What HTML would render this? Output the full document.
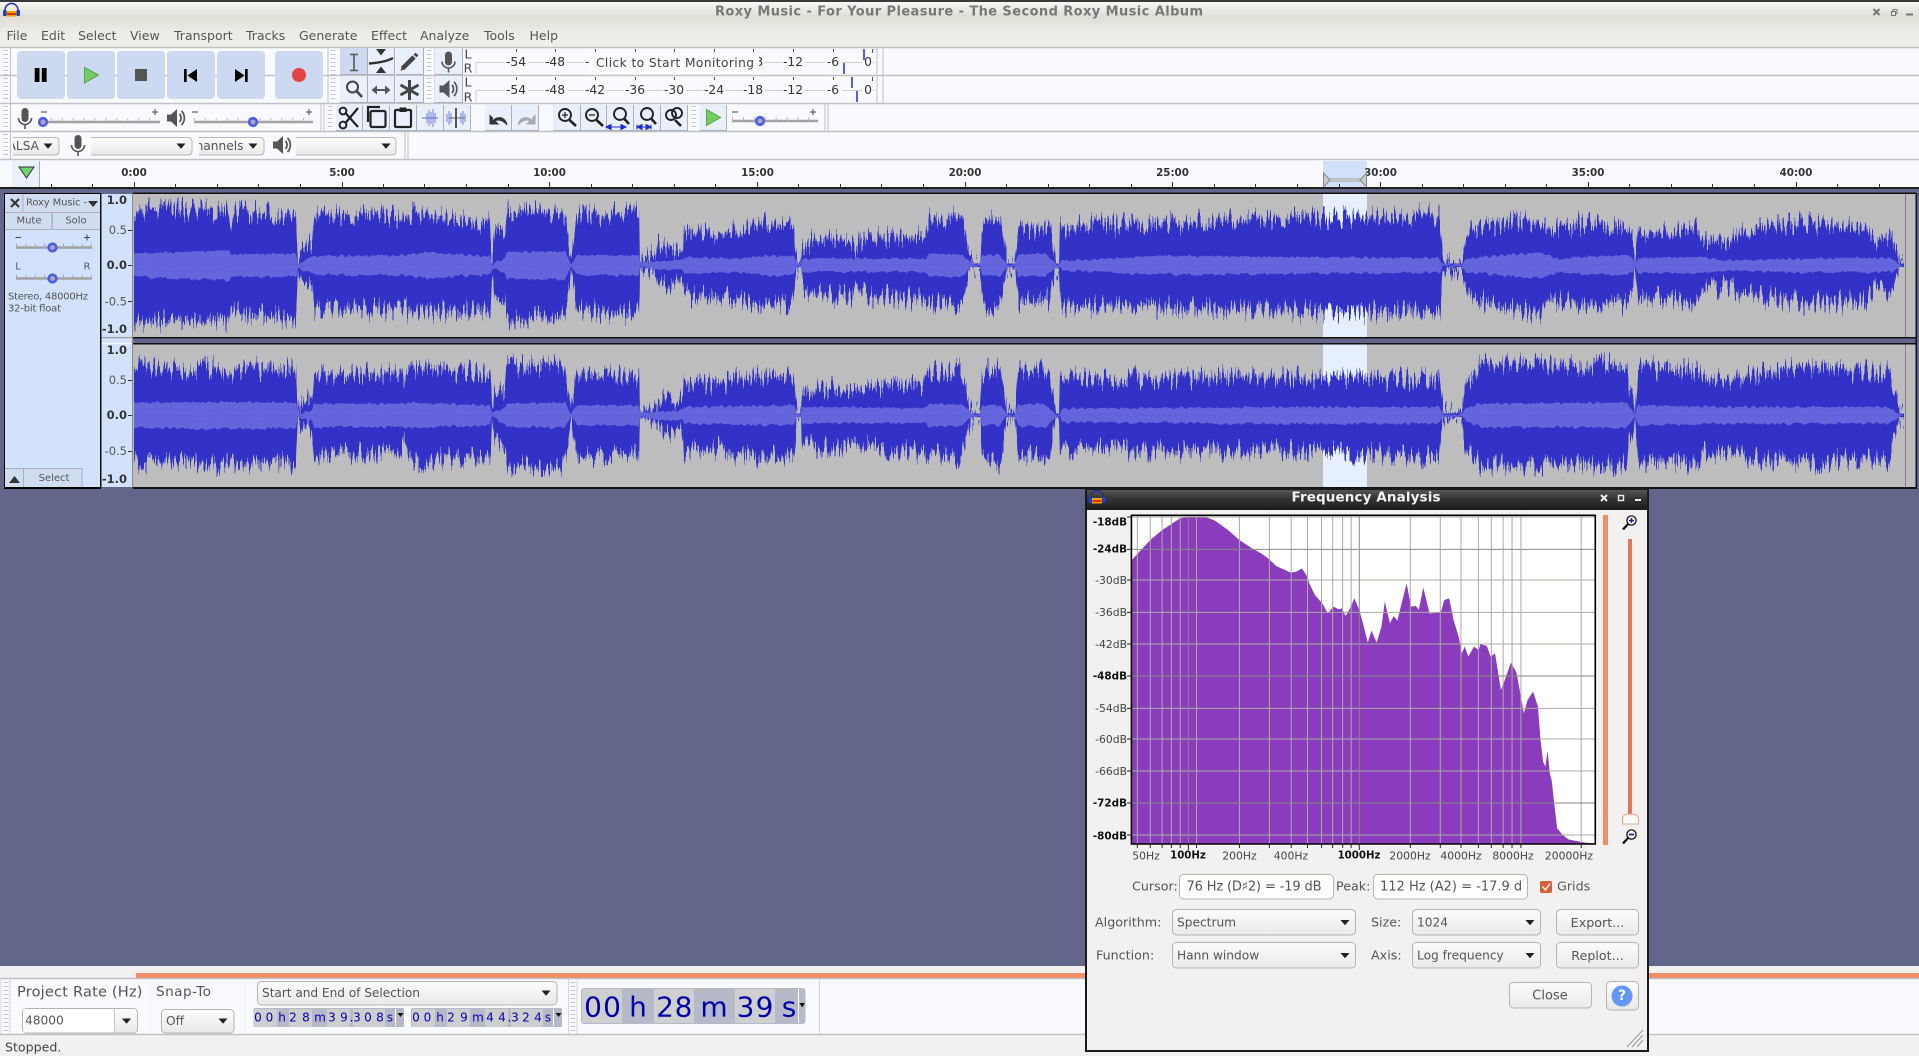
<!DOCTYPE html>
<html lang="en"><head><meta charset="utf-8"><title>Roxy Music - For Your Pleasure - The Second Roxy Music Album</title>
<style>
html,body{margin:0;padding:0;background:#62668a;overflow:hidden}
svg{display:block}
text{font-family:"DejaVu Sans",sans-serif;dominant-baseline:central;fill:#555;font-size:12.5px}
.c{text-anchor:middle}.e{text-anchor:end}
.rul{font-size:10.3px;font-weight:bold;fill:#333;text-anchor:middle}
.mt{font-size:12.3px;fill:#333;text-anchor:middle}
.pn{font-size:10px;fill:#555}
.vb{font-size:11.5px;font-weight:bold;fill:#333;text-anchor:end}
.vn{font-size:11.5px;fill:#555;text-anchor:end}
.db{font-size:10.4px;font-weight:bold;fill:#111;text-anchor:end}
.dn{font-size:10.8px;fill:#444;text-anchor:end}
.hz{font-size:10.8px;fill:#444;text-anchor:middle}
.hb{font-size:10.2px;font-weight:bold;fill:#111;text-anchor:middle}
.dl{font-size:12.7px;fill:#555}
.cb{font-size:12.2px;fill:#555}
.st{font-size:12px;fill:#0000b0;text-anchor:middle}
.bt{font-size:28px;fill:#0000a8;text-anchor:middle}
.btn{fill:#e9f0fc;stroke:none}
.bev{fill:none;stroke:#aab0bc;stroke-width:1}
.g{stroke:#c8c8c8;stroke-width:5;stroke-dasharray:1 3;fill:none}
.s{stroke:#c2c2c4;stroke-width:1.5;fill:none}
.nss{vector-effect:non-scaling-stroke}
</style></head>
<body>
<svg xmlns="http://www.w3.org/2000/svg" width="1919" height="1056" viewBox="0 0 1919 1056">
<defs>
<linearGradient id="tb" x1="0" y1="0" x2="0" y2="1"><stop offset="0" stop-color="#fafaf7"/><stop offset=".35" stop-color="#dedfd6"/><stop offset=".75" stop-color="#efede8"/><stop offset="1" stop-color="#f0eeea"/></linearGradient>
<linearGradient id="cg" x1="0" y1="0" x2="0" y2="1"><stop offset="0" stop-color="#fcfcfc"/><stop offset="1" stop-color="#e9e9e7"/></linearGradient>
<linearGradient id="ft" x1="0" y1="0" x2="0" y2="1"><stop offset="0" stop-color="#555"/><stop offset=".45" stop-color="#333"/><stop offset="1" stop-color="#1c1c1c"/></linearGradient>
<filter id="sp" x="0" y="-10%" width="100%" height="120%" color-interpolation-filters="sRGB">
<feTurbulence type="fractalNoise" baseFrequency="0.55 0.012" numOctaves="2" seed="4"/>
<feColorMatrix values="1.8 0 0 0 -0.38  0 0 0 0 .5  0 0 0 0 .5  0 0 0 0 1"/>
<feDisplacementMap in="SourceGraphic" scale="26" xChannelSelector="G" yChannelSelector="R"/>
</filter>
<filter id="sr" x="0" y="-10%" width="100%" height="120%" color-interpolation-filters="sRGB">
<feTurbulence type="fractalNoise" baseFrequency="0.25 0.02" numOctaves="1" seed="9"/>
<feColorMatrix values="1.2 0 0 0 -0.1  0 0 0 0 .5  0 0 0 0 .5  0 0 0 0 1"/>
<feDisplacementMap in="SourceGraphic" scale="5" xChannelSelector="G" yChannelSelector="R"/>
</filter>
<clipPath id="w1"><rect x="134" y="194" width="1771" height="143"/></clipPath>
<clipPath id="w2"><rect x="134" y="344" width="1771" height="143"/></clipPath>
<clipPath id="alsa"><rect x="13" y="135" width="46" height="22"/></clipPath>
<clipPath id="chan"><rect x="199" y="135" width="65" height="22"/></clipPath>
<clipPath id="pk"><rect x="1374" y="875" width="148" height="24"/></clipPath>
<g id="mic"><rect x="-3.5" y="-10" width="7" height="14" rx="3.5" fill="#555"/><path d="M-6.5,0 a6.5,6.5 0 0 0 13,0 M0,6.5 V11" fill="none" stroke="#555" stroke-width="1.6"/></g>
<g id="spk"><path d="M-9,-3.5 H-5 L1,-9 V9 L-5,3.5 H-9Z" fill="#555"/><path d="M3.5,-4 a6,6 0 0 1 0,8 M5.5,-7 a10,10 0 0 1 0,14" fill="none" stroke="#555" stroke-width="1.7"/></g>
<g id="aud"><path d="M-6.5,2 V0 A6.5,6.5 0 0 1 6.5,0 V2" fill="none" stroke="#1c2f9e" stroke-width="1.5"/><rect x="-8.5" y="0" width="3.5" height="6" rx="1" fill="#1c3fc8"/><rect x="5" y="0" width="3.5" height="6" rx="1" fill="#1c3fc8"/><rect x="-5" y="1" width="10" height="5.5" fill="#f5a000"/><rect x="-4.5" y="3" width="9" height="2" fill="#e03010"/></g>
<g id="arr"><path d="M-4.5,-2.5 H4.5 L0,2.8Z" fill="#222"/></g>
<g id="thumb"><circle r="3.8" fill="#a8a8b8" stroke="#4c5ce8" stroke-width="2.6"/></g>
<polygon id="r1" points="134,0 134,-35 229,-45 231,-33 296,-35 298,-5 302,-12 314,-28 402,-30 430,-40 445,-35 490,-27 492,-5 505,-22 507,-40 565,-42 571,-3 577,-30 639,-30 640,-5 656,-12 683,-15 684,-25 738,-20 771,-30 794,-28 797,-4 801,-4 802,-20 926,-20 929,-35 962,-32 970,-10 975,-3 980,-3 982,-30 1000,-32 1007,-3 1015,-3 1018,-32 1045,-35 1056,-5 1060,-5 1062,-15 1100,-18 1150,-28 1200,-28 1280,-25 1439,-22 1443,-3 1462,-3 1466,-20 1509,-32 1541,-38 1560,-18 1574,-25 1627,-30 1633,-20 1635,-3 1638,-22 1700,-25 1725,-15 1800,-20 1868,-22 1892,-20 1900,-3 1904,0"/>
<polygon id="r2" points="134,0 134,-38 229,-40 296,-38 298,-5 312,-15 314,-35 402,-35 408,-38 490,-30 492,-5 505,-25 507,-35 565,-38 571,-3 577,-30 639,-30 640,-5 656,-12 683,-15 684,-25 794,-30 797,-4 801,-4 802,-25 926,-22 929,-35 962,-32 970,-10 975,-3 980,-3 982,-30 1000,-30 1007,-3 1015,-3 1018,-32 1045,-35 1056,-3 1060,-3 1062,-20 1280,-25 1439,-25 1443,-3 1462,-3 1466,-20 1480,-35 1627,-38 1635,-3 1638,-30 1725,-25 1800,-25 1888,-25 1900,-3 1904,0"/>
</defs>

<!-- base -->
<rect width="1919" height="1056" fill="#62668a"/>

<!-- title + menu -->
<rect x="0" y="0" width="1919" height="47" fill="url(#tb)"/>
<rect x="0" y="0" width="1919" height="2" fill="#3a3a3a"/>
<use href="#aud" x="11.5" y="10"/>
<text x="959" y="12" class="c" style="font-size:13px;font-weight:bold;fill:#777" textLength="488">Roxy Music - For Your Pleasure - The Second Roxy Music Album</text>
<path d="M1873.5,9 L1879.5,15 M1879.5,9 L1873.5,15" stroke="#777" stroke-width="2"/>
<path d="M1891.5,11.5 h4 v4 h-4z M1893,11.5 v-2 h4 v4 h-1.5" fill="none" stroke="#777"/>
<rect x="1906" y="13.5" width="7" height="2" fill="#777"/>
<g style="font-size:12.9px">
<text x="6.5" y="35.5">File</text><text x="41" y="35.5">Edit</text><text x="78" y="35.5">Select</text><text x="130" y="35.5">View</text><text x="174" y="35.5">Transport</text><text x="246" y="35.5">Tracks</text><text x="299" y="35.5">Generate</text><text x="371" y="35.5">Effect</text><text x="420" y="35.5">Analyze</text><text x="484" y="35.5">Tools</text><text x="529.5" y="35.5">Help</text>
</g>

<!-- toolbars background -->
<rect x="0" y="47" width="1919" height="140" fill="#f9faff"/>
<path class="s" d="M0,47.5H1919M0,75.5H1919M0,103.5H1919M0,131.5H1919M0,159.5H1919"/>
<path class="s" style="stroke-width:1" d="M328,48V103M10.5,48V159M435,48V103M321,104V131M324,104V131M405,132V159M408,132V159M877,48V103M883,48V103M825,104V131M828,104V131"/>
<line class="g" x1="5.5" y1="50" x2="5.5" y2="101"/><line class="g" x1="5.5" y1="106" x2="5.5" y2="130"/><line class="g" x1="5.5" y1="134" x2="5.5" y2="157"/>
<line class="g" x1="333" y1="50" x2="333" y2="101"/><line class="g" x1="429" y1="50" x2="429" y2="73"/><line class="g" x1="429" y1="78" x2="429" y2="101"/>
<line class="g" x1="330" y1="106" x2="330" y2="129"/><line class="g" x1="693.5" y1="106" x2="693.5" y2="129"/>

<!-- transport -->
<g fill="#cdd9f0"><rect x="17" y="51" width="48" height="48" rx="4"/><rect x="67" y="51" width="48" height="48" rx="4"/><rect x="117" y="51" width="48" height="48" rx="4"/><rect x="167" y="51" width="48" height="48" rx="4"/><rect x="217" y="51" width="48" height="48" rx="4"/><rect x="275" y="51" width="48" height="48" rx="4"/></g>
<rect x="34.7" y="68" width="4.8" height="14" fill="#000"/><rect x="41.8" y="68" width="4.8" height="14" fill="#000"/>
<path d="M84.5,67.5V83L98.5,75Z" fill="#74cc62" stroke="#52a548"/>
<rect x="135" y="69" width="12" height="12" fill="#555"/>
<rect x="184" y="69" width="2.7" height="13" fill="#000"/><path d="M197,69V82L187.5,75.5Z" fill="#000"/>
<rect x="245" y="69" width="2.7" height="13" fill="#000"/><path d="M235,69V82L244.5,75.5Z" fill="#000"/>
<circle cx="299" cy="75" r="7" fill="#e34444"/>

<!-- tool buttons -->
<rect x="340" y="48" width="27" height="26" fill="#cdd9f0"/><rect x="368" y="48" width="26.5" height="26" class="btn"/><rect x="396" y="48" width="27" height="26" class="btn"/>
<rect x="340" y="76" width="27" height="26" class="btn"/><rect x="368" y="76" width="26.5" height="26" class="btn"/><rect x="396" y="76" width="27" height="26" class="btn"/>
<rect x="435" y="48" width="27" height="26" class="btn"/><rect x="435" y="76" width="27" height="26" class="btn"/>
<path class="bev" d="M367.5,48V74.5H340M394.5,48V74.5H368M423.5,48V74.5H396M367.5,76V102.5H340M394.5,76V102.5H368M423.5,76V102.5H396M462.5,48V74.5H435M462.5,76V102.5H435"/>
<path d="M350,54.5H358M350,70.5H358M354,54.5V70.5" stroke="#555" stroke-width="1.6" fill="none"/>
<path d="M376,49H386L381,55.5ZM376,73H386L381,66.5Z" fill="#333"/><path d="M369,63.5C376,63 386,62 393,58" stroke="#333" stroke-width="2.4" fill="none"/>
<path d="M402.5,68.5L414,57" stroke="#444" stroke-width="4.5"/><path d="M415,56L417,54" stroke="#444" stroke-width="4"/><path d="M400.5,71L402,66L405,69Z" fill="#444"/>
<circle cx="352.5" cy="87" r="5.5" fill="none" stroke="#444" stroke-width="2"/><path d="M356.5,91L362,97" stroke="#444" stroke-width="2.6"/>
<path d="M375,90H387" stroke="#555" stroke-width="2"/><path d="M377,85.5L371.5,90L377,94.5ZM385,85.5L390.5,90L385,94.5Z" fill="#555"/>
<path d="M409.5,80V100M400.5,85L418.5,95M418.5,85L400.5,95" stroke="#444" stroke-width="3"/>
<use href="#mic" x="448.5" y="61.5"/><use href="#spk" x="448.5" y="89"/>
<text x="468" y="54" class="c" style="font-size:12.6px;fill:#444">L</text><text x="468" y="68" class="c" style="font-size:12.6px;fill:#444">R</text>
<text x="468" y="82" class="c" style="font-size:12.6px;fill:#444">L</text><text x="468" y="97" class="c" style="font-size:12.6px;fill:#444">R</text>

<!-- meters -->
<path d="M476,62.5H875M476,90.5H875M476,62V74M476,90V102" stroke="#cfcfd2" stroke-width="1" fill="none"/>
<path d="M516.5,49V52M555.5,49V52M595.5,49V52M635.5,49V52M674.5,49V52M714.5,49V52M753.5,49V52M793.5,49V52M833.5,49V52M872.5,49V53M516.5,77V80M555.5,77V80M595.5,77V80M635.5,77V80M674.5,77V80M714.5,77V80M753.5,77V80M793.5,77V80M833.5,77V80M872.5,77V81" stroke="#555"/>
<g fill="#f9faff"><rect x="505" y="55" width="23" height="14"/><rect x="544" y="55" width="23" height="14"/><rect x="584" y="55" width="23" height="14"/><rect x="742" y="55" width="23" height="14"/><rect x="782" y="55" width="23" height="14"/><rect x="825" y="55" width="17" height="14"/><rect x="862" y="55" width="11" height="14"/>
<rect x="505" y="83" width="23" height="14"/><rect x="544" y="83" width="23" height="14"/><rect x="584" y="83" width="23" height="14"/><rect x="624" y="83" width="23" height="14"/><rect x="663" y="83" width="23" height="14"/><rect x="703" y="83" width="23" height="14"/><rect x="742" y="83" width="23" height="14"/><rect x="782" y="83" width="23" height="14"/><rect x="825" y="83" width="17" height="14"/><rect x="862" y="83" width="11" height="14"/></g>
<text x="516" y="62" class="mt">-54</text><text x="555" y="62" class="mt">-48</text><text x="595" y="62" class="mt">-42</text><text x="753" y="62" class="mt">-18</text><text x="793" y="62" class="mt">-12</text><text x="833" y="62" class="mt">-6</text><text x="868" y="62" class="mt">0</text>
<text x="516" y="90" class="mt">-54</text><text x="555" y="90" class="mt">-48</text><text x="595" y="90" class="mt">-42</text><text x="635" y="90" class="mt">-36</text><text x="674" y="90" class="mt">-30</text><text x="714" y="90" class="mt">-24</text><text x="753" y="90" class="mt">-18</text><text x="793" y="90" class="mt">-12</text><text x="833" y="90" class="mt">-6</text><text x="868" y="90" class="mt">0</text>
<rect x="590.5" y="54.5" width="168" height="18" fill="#fbfbff" stroke="#fff"/>
<text x="596" y="63" style="font-size:12.2px;fill:#444" textLength="158">Click to Start Monitoring</text>
<g fill="#5a5af0"><rect x="863" y="49" width="2" height="11"/><rect x="843" y="63" width="2" height="11"/><rect x="851" y="77" width="2" height="11"/><rect x="856" y="91" width="2" height="11"/></g>

<!-- mixer row -->
<use href="#mic" x="25" y="118"/><use href="#spk" x="176" y="118"/>
<g stroke="#a2a2a2" fill="none"><path d="M40,122H160M194,122H313M732,121H818" stroke-width="2.6"/><path d="M40,120H160M194,120H313M732,119H818" stroke-width="4" stroke-dasharray="1 9.9" stroke="#bbb"/></g>
<use href="#thumb" x="43" y="122"/><use href="#thumb" x="253" y="122"/><use href="#thumb" x="760" y="121"/>
<path d="M41,112H47M152,112H158M155,109V115M192,112H198M306,112H312M309,109V115M732,112H738M810,112H816M813,109V115" stroke="#444"/>

<!-- edit buttons -->
<g class="btn"><rect x="336" y="105" width="26" height="25"/><rect x="363" y="105" width="26" height="25"/><rect x="390" y="105" width="26" height="25"/><rect x="417" y="105" width="26" height="25"/><rect x="444" y="105" width="26" height="25"/><rect x="485" y="105" width="26" height="25"/><rect x="512" y="105" width="26" height="25"/><rect x="553" y="105" width="27" height="25"/><rect x="580.5" y="105" width="26" height="25"/><rect x="607" y="105" width="26" height="25"/><rect x="634" y="105" width="26" height="25"/><rect x="661" y="105" width="26" height="25"/><rect x="699.5" y="105" width="26.5" height="25"/></g>
<path class="bev" d="M362.5,105V130.5H336M389.5,105V130.5H363M416.5,105V130.5H390M443.5,105V130.5H417M470.5,105V130.5H444M511.5,105V130.5H485M538.5,105V130.5H512M580.5,105V130.5H553M606.5,105V130.5H581M633.5,105V130.5H607M660.5,105V130.5H634M687.5,105V130.5H661M726.5,105V130.5H699.5"/>
<g fill="none" stroke="#222">
<circle cx="343" cy="125" r="3.4" stroke-width="2"/><circle cx="343" cy="111" r="3.4" stroke-width="2"/><path d="M345.5,113L358,127M345.5,123L358,108" stroke-width="2.2"/>
<rect x="370.5" y="111" width="15" height="16" rx="1.5" fill="#e9f0fc" stroke-width="2.2"/><path d="M368,122V107H380" stroke-width="2.2"/>
<rect x="395" y="110" width="16" height="17" rx="1" stroke-width="2.2"/><rect x="399.5" y="107.5" width="7" height="4.5" fill="#222" stroke="none"/>
</g>
<g stroke="#5a64d8" fill="none"><path d="M422,118H438" stroke-width="1"/><path d="M427,113V123M429,110V126M431,112V124M433,109V127M435,113V123" stroke-width=".8"/><path d="M449,118H465" stroke="#666" stroke-width="1"/><path d="M447,114V122M449,111V125M451,113V123M461,113V123M463,111V125M465,114V122" stroke-width=".8"/><path d="M456,108V128" stroke="#444" stroke-width="1.8"/></g>
<path d="M492,123C494,116 505,115 507,125C503,120 498,119 495,121L498,124H490V115.5L493,118.5" fill="#333" stroke="#333" stroke-width="1"/>
<path d="M533,123C531,116 520,115 518,125C522,120 527,119 530,121L527,124H535V115.5L532,118.5" fill="#aaa" stroke="#aaa" stroke-width="1"/>
<g fill="none" stroke="#222" stroke-width="1.9">
<circle cx="565" cy="115" r="6"/><path d="M569.5,120L576,126" stroke-width="2.6"/><path d="M562,115H568M565,112V118" stroke-width="1.3"/>
<circle cx="592" cy="115" r="6"/><path d="M596.5,120L603,126" stroke-width="2.6"/><path d="M589,115H595" stroke-width="1.3"/>
<circle cx="620" cy="114" r="6"/><path d="M624.5,119L629,124" stroke-width="2.6"/>
<circle cx="647" cy="114" r="6"/><path d="M651.5,119L656,124" stroke-width="2.6"/>
<circle cx="671" cy="115" r="5"/><circle cx="677" cy="113" r="5"/><path d="M675,120L681,126" stroke-width="2.6"/>
</g>
<path d="M610,127H622M606,127L611,124.5V129.5ZM626,127L621,124.5V129.5Z" fill="#1c2cc8" stroke="#1c2cc8"/>
<path d="M637,127H651M637,124.5V129.5M651,124.5V129.5M637,127L642,124.5V129.5ZM651,127L646,124.5V129.5Z" fill="#1c2cc8" stroke="#1c2cc8"/>
<path d="M706.5,109.5V125.5L720.5,117.5Z" fill="#74cc62" stroke="#52a548"/>

<!-- device row -->
<g fill="url(#cg)" stroke="#b8b8b6">
<path d="M13,137.5H55q4,0 4,4V151q0,4 -4,4H13"/>
<path d="M91,137.5H188q4,0 4,4V151q0,4 -4,4H91"/>
<path d="M199,137.5H260q4,0 4,4V151q0,4 -4,4H199"/>
<path d="M296,137.5H392q4,0 4,4V151q0,4 -4,4H296"/>
</g>
<g clip-path="url(#alsa)"><text x="39" y="146" class="e cb">ALSA</text></g>
<g clip-path="url(#chan)"><text x="243.5" y="146" class="e cb">Channels</text></g>
<use href="#arr" x="48" y="146"/><use href="#arr" x="181" y="146"/><use href="#arr" x="253" y="146"/><use href="#arr" x="386" y="146"/>
<use href="#mic" x="78" y="145"/><use href="#spk" x="282" y="145"/>

<!-- ruler -->
<rect x="12" y="161" width="27" height="26" fill="#eaf1fd"/><path class="bev" d="M39.5,161V187"/>
<path d="M19,167H34L26.5,178Z" fill="#74d070" stroke="#333"/>
<rect x="1323" y="161" width="44" height="26" fill="#d1e0fb"/>
<text x="134" y="173" class="rul">0:00</text><text x="342" y="173" class="rul">5:00</text><text x="549.5" y="173" class="rul">10:00</text><text x="757.5" y="173" class="rul">15:00</text><text x="965" y="173" class="rul">20:00</text><text x="1172.5" y="173" class="rul">25:00</text><text x="1380.5" y="173" class="rul">30:00</text><text x="1588" y="173" class="rul">35:00</text><text x="1796" y="173" class="rul">40:00</text>
<path stroke="#333" fill="none" d="M51.5,184V187M92.5,184V187M175.5,184V187M217.5,184V187M258.5,184V187M300.5,184V187M383.5,184V187M424.5,184V187M466.5,184V187M508.5,184V187M591.5,184V187M632.5,184V187M674.5,184V187M715.5,184V187M798.5,184V187M840.5,184V187M881.5,184V187M923.5,184V187M1006.5,184V187M1048.5,184V187M1089.5,184V187M1131.5,184V187M1214.5,184V187M1255.5,184V187M1297.5,184V187M1339.5,184V187M1422.5,184V187M1463.5,184V187M1505.5,184V187M1546.5,184V187M1629.5,184V187M1671.5,184V187M1712.5,184V187M1754.5,184V187M1837.5,184V187M1879.5,184V187M134.5,182V187M342.5,182V187M549.5,182V187M757.5,182V187M965.5,182V187M1172.5,182V187M1380.5,182V187M1588.5,182V187M1796.5,182V187"/>
<path d="M1329,180H1361" stroke="#999" stroke-width="3"/><path d="M1329,180H1361" stroke="#eee" stroke-width="1"/>
<path d="M1323.5,173V187L1330,180ZM1366.5,173V187L1360,180Z" fill="#ccc" stroke="#888"/>
<rect x="0" y="187" width="1919" height="2" fill="#222"/>

<!-- track panel -->
<rect x="4" y="193" width="97" height="296" fill="#000"/>
<rect x="5" y="194" width="95" height="293" fill="#d3e2fc"/>
<rect x="100" y="193" width="1.5" height="295" fill="#111"/>
<rect x="101.5" y="194" width="31.5" height="293" fill="#d3e2fc"/>
<rect x="101.5" y="337" width="31.5" height="1.2" fill="#999"/><rect x="101.5" y="343" width="31.5" height="1.2" fill="#f4f7ff"/>
<rect x="132" y="194" width="1.5" height="293" fill="#888"/>
<rect x="5" y="194" width="18" height="18" fill="#d0dcf0"/><rect x="24" y="194" width="76" height="18" fill="#d0dcf0"/>
<rect x="5" y="212.5" width="47" height="17" fill="#d0dcf0"/><rect x="53" y="212.5" width="47" height="17" fill="#d0dcf0"/>
<path class="bev" d="M23,194V212.5H5M100,212.5H24M52,212.5V229.5H5M100,229.5H53M52.5,212V229"/>
<path d="M11,199L19,207M19,199L11,207" stroke="#333" stroke-width="2"/>
<text x="26" y="203" class="pn" textLength="61">Roxy Music -</text>
<path d="M88,201H98L93,207Z" fill="#333"/>
<text x="29" y="221" class="pn c">Mute</text><text x="76" y="221" class="pn c">Solo</text>
<path d="M16,247.5H92M16,278.5H92" stroke="#a2a2a2" stroke-width="2.4"/><path d="M16,245.5H92M16,276.5H92" stroke="#aaa" stroke-width="4" stroke-dasharray="1 8.4"/>
<use href="#thumb" x="52.5" y="247.5"/><use href="#thumb" x="52.5" y="278.5"/>
<path d="M15.5,237.5H21M84,237.5H90M87,234.5V240.5" stroke="#444"/>
<text x="18" y="267" class="pn c">L</text><text x="87" y="267" class="pn c">R</text>
<text x="8" y="297" class="pn" textLength="80">Stereo, 48000Hz</text><text x="8" y="309" class="pn" textLength="53">32-bit float</text>
<rect x="5" y="469" width="18" height="18" fill="#d0dcf0"/><rect x="23.5" y="469" width="58" height="18" fill="#d0dcf0"/>
<path class="bev" d="M23.5,469V487M5,468.5H82V487M82,469V487"/>
<path d="M9,483H20L14.5,476Z" fill="#333"/>
<text x="54" y="478.5" class="pn c">Select</text>

<!-- vertical rulers -->
<text x="127" y="200" class="vb">1.0</text><text x="127" y="230" class="vn">0.5</text><text x="127" y="265" class="vb">0.0</text><text x="127" y="301.5" class="vn">-0.5</text><text x="127" y="329" class="vb">-1.0</text>
<text x="127" y="350" class="vb">1.0</text><text x="127" y="380" class="vn">0.5</text><text x="127" y="415" class="vb">0.0</text><text x="127" y="451" class="vn">-0.5</text><text x="127" y="479" class="vb">-1.0</text>
<path d="M128,230.5H132M128,265.5H132M128,301.5H132M128,380.5H132M128,415.5H132M128,451.5H132" stroke="#333"/>

<!-- waveforms -->
<rect x="133" y="194" width="1772" height="143" fill="#bdbdbd"/><rect x="133" y="344" width="1772" height="143" fill="#bdbdbd"/>
<rect x="1323" y="194" width="44" height="143" fill="#e6efff"/><rect x="1323" y="344" width="44" height="143" fill="#e6efff"/>
<g clip-path="url(#w1)">
<rect x="134" y="263.5" width="1770" height="3.5" fill="#3232c8"/>
<g filter="url(#sp)"><g transform="translate(0,180) scale(1,.33333)"><polygon fill="#3232c8" points="134,85 229,95 231,150 236,90 296,110 298,250 302,200 312,190 314,110 402,110 404,150 408,100 490,130 492,250 495,150 505,150 507,95 565,100 571,240 577,105 639,100 640,250 643,240 656,225 658,200 683,215 684,160 700,160 718,165 738,150 771,130 794,150 797,250 801,250 802,210 815,175 854,190 856,220 860,180 926,170 929,115 962,115 970,235 975,253 980,253 982,150 987,125 1001,125 1007,250 1015,250 1018,145 1050,145 1056,250 1059,250 1060,145 1100,135 1150,135 1200,125 1280,120 1439,105 1440,120 1443,240 1462,250 1466,170 1480,140 1509,125 1541,125 1544,150 1574,150 1576,130 1627,145 1629,170 1633,170 1635,250 1638,160 1700,150 1702,180 1725,190 1741,160 1802,130 1868,145 1876,185 1892,170 1900,250 1904,254 1904,258 1900,262 1892,335 1876,320 1868,365 1802,370 1741,340 1725,320 1702,330 1700,370 1638,350 1635,262 1633,340 1629,340 1627,370 1576,385 1574,365 1544,360 1541,400 1509,390 1480,360 1466,350 1462,262 1443,272 1440,390 1439,400 1280,395 1060,375 1059,262 1056,262 1050,360 1018,365 1015,262 1007,262 1001,385 987,385 982,360 980,259 975,259 970,275 962,380 929,375 926,360 860,345 856,300 854,350 815,345 802,320 801,262 797,262 794,370 771,380 738,365 718,350 684,350 683,310 658,315 656,285 643,275 640,262 639,400 577,395 571,270 565,410 507,425 505,370 495,360 492,262 490,400 408,395 404,350 402,390 314,390 312,320 302,310 298,262 296,420 236,400 231,370 229,425 134,425"/></g></g>
<g filter="url(#sr)"><g transform="translate(0,180) scale(1,.33333)" fill="#6464dc"><use href="#r1" transform="translate(0,256)"/><use href="#r1" transform="translate(0,256) scale(1,-1)"/></g></g>
</g>
<g clip-path="url(#w2)">
<rect x="134" y="413.5" width="1770" height="3.5" fill="#3232c8"/>
<g filter="url(#sp)"><g transform="translate(0,180) scale(1,.33333)"><polygon fill="#3232c8" points="134,560 229,565 232,600 236,565 296,570 298,695 302,670 312,660 314,585 402,575 404,625 408,565 490,580 492,700 495,630 505,625 507,560 565,560 571,690 577,590 639,585 640,700 643,695 656,675 658,665 683,660 684,600 700,600 724,620 727,595 794,590 797,700 801,700 802,640 820,625 854,630 926,610 929,580 962,570 970,685 975,702 980,702 982,590 987,570 1001,570 1007,700 1015,700 1018,580 1040,565 1050,600 1056,700 1059,700 1060,595 1280,590 1439,600 1443,695 1462,700 1466,600 1478,600 1479,555 1627,550 1629,640 1633,640 1635,700 1638,560 1700,575 1702,600 1725,600 1741,590 1790,560 1888,580 1896,640 1900,700 1904,702 1904,710 1900,712 1896,760 1888,835 1790,850 1741,835 1725,820 1702,820 1700,850 1638,845 1635,712 1633,770 1629,770 1627,860 1479,860 1478,815 1466,815 1462,712 1443,717 1439,830 1280,815 1060,810 1059,712 1056,712 1050,830 1040,840 1018,820 1015,712 1007,712 1001,850 987,850 982,820 980,710 975,710 970,725 962,830 929,820 926,820 854,800 820,810 802,790 801,712 797,712 794,830 727,830 724,800 700,810 684,815 683,760 658,745 656,735 643,715 640,712 639,830 577,830 571,720 565,860 507,860 505,800 495,780 492,712 490,830 408,845 404,770 402,820 314,830 312,745 302,740 298,717 296,850 236,850 232,830 229,855 134,850"/></g></g>
<g filter="url(#sr)"><g transform="translate(0,180) scale(1,.33333)" fill="#6464dc"><use href="#r2" transform="translate(0,706)"/><use href="#r2" transform="translate(0,706) scale(1,-1)"/></g></g>
</g>
<rect x="1905" y="194" width="1.2" height="143" fill="#808080"/><rect x="1905" y="344" width="1.2" height="143" fill="#808080"/>
<rect x="1906" y="194" width="10" height="143" fill="#bdbdbd"/><rect x="1906" y="344" width="10" height="143" fill="#bdbdbd"/>
<g fill="#111"><rect x="133" y="192.5" width="1783" height="1.5"/><rect x="133" y="337" width="1783" height="1.5"/><rect x="133" y="343" width="1783" height="1.5"/><rect x="133" y="487" width="1783" height="2"/><rect x="1915.5" y="193" width="1.5" height="296"/></g>

<!-- bottom bar -->
<rect x="0" y="966" width="1919" height="90" fill="#f2f1f0"/>
<rect x="136" y="973" width="1783" height="5" fill="#f28c65"/>
<rect x="0" y="979" width="1919" height="55" fill="#f9faff"/>
<path class="s" d="M0,978.5H1919M0,1034.5H1919"/>
<path d="M150,979V1034M245,979V1034" stroke="#eceef4" fill="none"/>
<path d="M1,979V1034M10,979V1034M568.5,979V1034M577,979V1034M819.5,979V1034" stroke="#d4d6dc" fill="none"/>
<line class="g" x1="6" y1="982" x2="6" y2="1032"/><line class="g" x1="572.8" y1="982" x2="572.8" y2="1032"/>
<text x="17" y="992" style="font-size:14.6px" textLength="125.5">Project Rate (Hz)</text>
<text x="156" y="992" style="font-size:13.6px" textLength="55">Snap-To</text>
<rect x="22.5" y="1008.5" width="115" height="24.5" rx="4" fill="url(#cg)" stroke="#b4b4b0"/>
<path d="M26,1009H114.5V1032.5H26q-3,0 -3,-3V1012q0,-3 3,-3Z" fill="#fff"/><path d="M114.5,1009V1033" stroke="#c4c4c4"/>
<text x="25" y="1020.5" class="cb">48000</text><use href="#arr" x="126.5" y="1021"/>
<rect x="161.5" y="1009.5" width="72.5" height="23.5" rx="4" fill="url(#cg)" stroke="#b4b4b0"/>
<text x="166" y="1021" class="cb">Off</text><use href="#arr" x="223" y="1021"/>
<rect x="257.5" y="981.5" width="299.5" height="23.5" rx="4" fill="url(#cg)" stroke="#b4b4b0"/>
<text x="262" y="993" class="cb" textLength="158">Start and End of Selection</text><use href="#arr" x="546" y="993"/>
<!-- small time 1 -->
<rect x="253.5" y="1008" width="150.5" height="19" rx="1.5" fill="#b6bac8"/>
<g fill="#cecece"><rect x="254" y="1009" width="23" height="18"/><rect x="289" y="1009" width="23" height="18"/><rect x="327" y="1009" width="23" height="18"/><rect x="353" y="1009" width="32" height="18"/></g>
<rect x="395" y="1009" width="1" height="17" fill="#fff"/><path d="M397.5,1013H403.5L400.5,1017Z" fill="#111"/>
<text y="1017.5" class="st" x="258 269.5 282 293 306 320 332 344 351.5 357 368 380 390">00h28m39.308s</text>
<!-- small time 2 -->
<rect x="411" y="1008" width="151" height="19" rx="1.5" fill="#b6bac8"/>
<g fill="#cecece"><rect x="412" y="1009" width="23" height="18"/><rect x="447" y="1009" width="23" height="18"/><rect x="485" y="1009" width="23" height="18"/><rect x="511" y="1009" width="32" height="18"/></g>
<rect x="553" y="1009" width="1" height="17" fill="#fff"/><path d="M555.5,1013H561.5L558.5,1017Z" fill="#111"/>
<text y="1017.5" class="st" x="416 427.5 440 451 464 478 490 502 509.5 515 526 538 548">00h29m44.324s</text>
<!-- big time -->
<rect x="581" y="988" width="224.5" height="36" rx="3" fill="#b6bac8"/>
<g fill="#cfcfcf"><rect x="582" y="989" width="40" height="34"/><rect x="654" y="989" width="40" height="34"/><rect x="735" y="989" width="40" height="34"/></g>
<rect x="798" y="989" width="1" height="34" fill="#fff"/><path d="M799.5,1003H805L802.2,1007.5Z" fill="#111"/>
<text x="593 612" y="1007" class="bt">00</text><text x="638" y="1007" class="bt">h</text><text x="665 683.5" y="1007" class="bt">28</text><text x="714" y="1007" class="bt">m</text><text x="745.5 764.5" y="1007" class="bt">39</text><text x="789" y="1007" class="bt">s</text>
<text x="5" y="1047" style="font-size:12.6px;fill:#444">Stopped.</text>

<!-- frequency analysis window -->
<rect x="1085" y="488" width="564" height="564" fill="#1a1a1a"/>
<rect x="1087" y="490" width="560" height="20" fill="url(#ft)"/>
<rect x="1087" y="510" width="560" height="540" fill="#f2f1f0"/>
<use href="#aud" x="1097" y="497"/>
<text x="1366" y="497.5" class="c" style="font-size:13.5px;font-weight:bold;fill:#f2f2f2" textLength="149">Frequency Analysis</text>
<path d="M1601,495L1607,501M1607,495L1601,501" stroke="#eee" stroke-width="2"/><rect x="1618.5" y="495.5" width="5" height="5" fill="none" stroke="#eee" stroke-width="1.4"/><rect x="1635" y="499" width="6" height="2" fill="#eee"/>
<svg x="1080" y="480" width="580" height="400" viewBox="0 0 1568 1200" preserveAspectRatio="none">
<rect x="139" y="106" width="1254" height="986" fill="#fff"/>
<polygon fill="#8b3cbd" points="140,240 190,180 222,150 250,130 270,115 293,109 335,109 365,122 400,150 431,180 465,205 490,220 512,238 530,258 570,278 585,275 600,265 612,285 620,310 635,345 655,370 670,400 685,380 700,388 708,385 718,408 730,385 742,355 755,390 765,430 778,488 788,452 802,488 815,440 824,365 838,430 848,408 858,422 870,368 883,310 895,380 908,378 916,390 928,322 945,400 975,398 985,360 998,355 1010,420 1025,475 1032,520 1040,500 1050,530 1065,500 1078,510 1082,492 1100,498 1110,530 1122,520 1138,630 1150,595 1165,548 1180,578 1192,650 1200,700 1210,660 1225,635 1238,680 1245,780 1252,845 1258,860 1264,812 1270,880 1275,900 1283,980 1290,1045 1305,1065 1320,1078 1365,1088 1393,1090 1393,1092 140,1092"/>
<g stroke="#a8aca4" stroke-width="1" fill="none">
<path class="nss" d="M139,111H1393M139,300H1393M139,397H1393M139,492H1393M139,685H1393M139,777H1393M139,873H1393M139,1065H1393M155,106V1092M190,106V1092M222,106V1092M247,106V1092M271,106V1092M315,106V1092M431,106V1092M512,106V1092M571,106V1092M615,106V1092M653,106V1092M683,106V1092M710,106V1092M733,106V1092M893,106V1092M974,106V1092M1030,106V1092M1077,106V1092M1112,106V1092M1144,106V1092M1168,106V1092M1192,106V1092M1355,106V1092"/>
<path class="nss" stroke="#858a84" d="M139,208H1393M139,588H1393M139,969H1393M293,106V1092M755,106V1092"/>
</g>
<rect class="nss" x="139" y="106" width="1254" height="986" fill="none" stroke="#000" stroke-width="1.6"/>
<path class="nss" stroke="#222" fill="none" d="M155,1092V1104M190,1092V1104M222,1092V1104M247,1092V1104M271,1092V1104M293,1092V1110M315,1092V1104M431,1092V1104M512,1092V1104M571,1092V1104M615,1092V1104M653,1092V1104M683,1092V1104M710,1092V1104M733,1092V1104M755,1092V1110M893,1092V1104M974,1092V1104M1030,1092V1104M1077,1092V1104M1112,1092V1104M1144,1092V1104M1168,1092V1104M1192,1092V1104M1355,1092V1104"/>
<path class="nss" stroke="#222" fill="none" d="M127,111H139M127,208H139M127,300H139M127,397H139M127,492H139M127,588H139M127,685H139M127,777H139M127,873H139M127,969H139M127,1065H139"/>
</svg>
<text x="1127" y="522.5" class="db">-18dB</text><text x="1127" y="549.5" class="db">-24dB</text><text x="1127" y="580.5" class="dn">-30dB</text><text x="1127" y="612.5" class="dn">-36dB</text><text x="1127" y="644.5" class="dn">-42dB</text><text x="1127" y="676.5" class="db">-48dB</text><text x="1127" y="708.5" class="dn">-54dB</text><text x="1127" y="739.5" class="dn">-60dB</text><text x="1127" y="771.5" class="dn">-66dB</text><text x="1127" y="803.5" class="db">-72dB</text><text x="1127" y="836.5" class="db">-80dB</text>
<text x="1146" y="856" class="hz">50Hz</text><text x="1188" y="856" class="hb">100Hz</text><text x="1239.5" y="856" class="hz">200Hz</text><text x="1291" y="856" class="hz">400Hz</text><text x="1359" y="856" class="hb">1000Hz</text><text x="1410" y="856" class="hz">2000Hz</text><text x="1461" y="856" class="hz">4000Hz</text><text x="1513" y="856" class="hz">8000Hz</text><text x="1569" y="856" class="hz">20000Hz</text>
<rect x="1603" y="515" width="5" height="330" fill="#f28c65"/>
<rect x="1627" y="539" width="6" height="276" fill="#f7ece8"/><rect x="1628" y="539" width="4" height="276" fill="#e07a55"/>
<path d="M1622.5,824V819q0,-5 7,-5h2q7,0 7,5V824Z" fill="#fafafa" stroke="#eea587"/>
<g fill="#fff" stroke="#111" stroke-width="1.3"><circle cx="1631.5" cy="520.5" r="4.6"/><circle cx="1631.5" cy="834.5" r="4.6"/></g>
<path d="M1628,524L1623,529.5M1628,838L1623,843.5" stroke="#111" stroke-width="2.4"/>
<path d="M1629,520.5H1634M1631.5,518V523" stroke="#1a1ab8" stroke-width="1.6"/><path d="M1629,834.5H1634" stroke="#1a1ab8" stroke-width="1.8"/>
<text x="1132" y="886" class="dl">Cursor:</text>
<rect x="1179.5" y="874.5" width="154" height="24.5" rx="4" fill="#fff" stroke="#b4b4b0"/>
<text x="1186.5" y="887" style="font-size:13px;fill:#555" textLength="135">76 Hz (D♯2) = -19 dB</text>
<text x="1336" y="886" class="dl">Peak:</text>
<rect x="1373.5" y="874.5" width="154" height="24.5" rx="4" fill="#fff" stroke="#b4b4b0"/>
<g clip-path="url(#pk)"><text x="1380" y="887" style="font-size:13px;fill:#555">112 Hz (A2) = -17.9 dB</text></g>
<rect x="1540" y="881" width="12" height="12" rx="2" fill="#d2613a"/><path d="M1542.5,886.5L1545.5,890L1550,883.5" stroke="#f6e3da" stroke-width="1.6" fill="none"/>
<text x="1557" y="886" class="dl">Grids</text>
<g fill="url(#cg)" stroke="#b4b4b0">
<rect x="1172.5" y="909.5" width="183" height="25.5" rx="4"/><rect x="1412.5" y="909.5" width="128" height="25.5" rx="4"/><rect x="1556.5" y="909.5" width="82" height="25.5" rx="4"/>
<rect x="1172.5" y="942.5" width="183" height="25.5" rx="4"/><rect x="1412.5" y="942.5" width="128" height="25.5" rx="4"/><rect x="1556.5" y="942.5" width="82" height="25.5" rx="4"/>
<rect x="1509.5" y="982.5" width="82" height="25.5" rx="4"/><rect x="1606.5" y="981.5" width="32" height="28.5" rx="4"/>
</g>
<text x="1095" y="922" class="dl">Algorithm:</text><text x="1177" y="922.5" class="cb">Spectrum</text><use href="#arr" x="1345" y="922.5"/>
<text x="1371" y="922" class="dl">Size:</text><text x="1417" y="922.5" class="cb">1024</text><use href="#arr" x="1530" y="922.5"/>
<text x="1597.5" y="922.5" class="dl c">Export...</text>
<text x="1096" y="955" class="dl">Function:</text><text x="1177" y="955.5" class="cb">Hann window</text><use href="#arr" x="1345" y="955.5"/>
<text x="1371" y="955" class="dl">Axis:</text><text x="1417" y="955.5" class="cb">Log frequency</text><use href="#arr" x="1530" y="955.5"/>
<text x="1597.5" y="955.5" class="dl c">Replot...</text>
<text x="1550" y="996" class="c" style="font-size:13px">Close</text>
<circle cx="1622" cy="996" r="10.5" fill="#6496f5"/><text x="1622" y="996" class="c" style="font-size:14px;font-weight:bold;fill:#fff">?</text>
<path d="M1627,1047L1643,1030M1632,1047L1643,1035M1637,1047L1643,1040" stroke="#9a9a9a" stroke-width="1.1"/>
</svg>
</body></html>
